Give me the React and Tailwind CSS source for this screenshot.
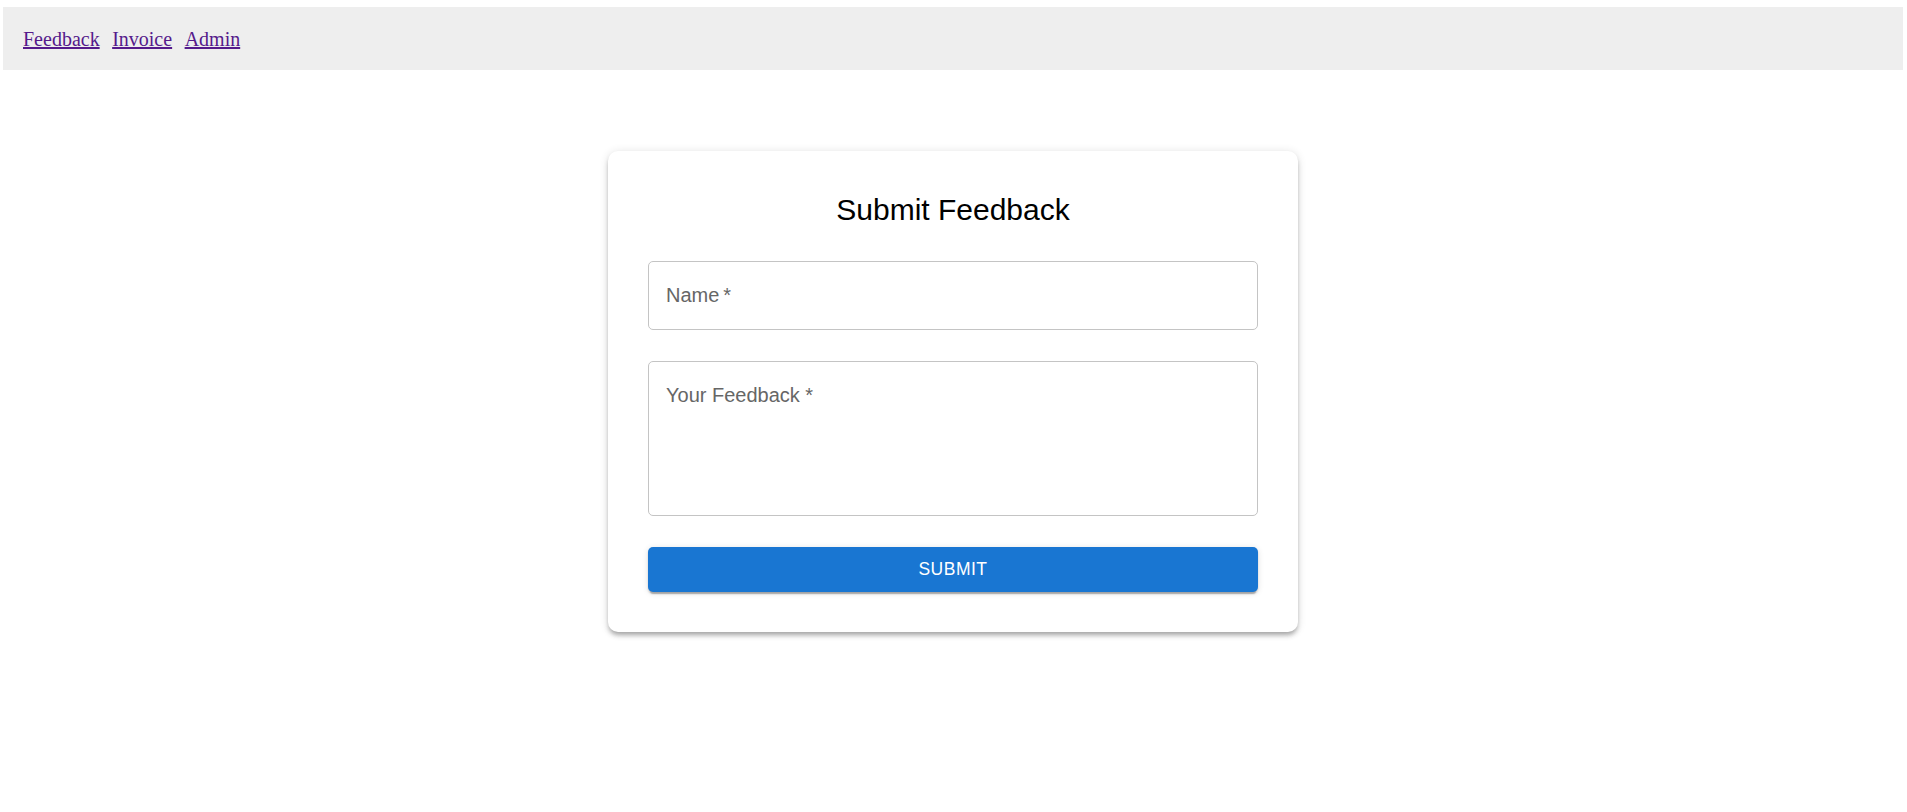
import React from "react";

export default function App() {
  return (
    <div className="min-h-[812px] bg-white pt-[7px]">
      <nav className="ml-[3px] mr-[4px] flex h-[63px] items-center gap-[12.5px] bg-[#eeeeee] pl-[20px] font-['Liberation_Serif',serif] text-[20px]">
        <a href="#" className="text-[#551a8b] underline">Feedback</a>
        <a href="#" className="text-[#551a8b] underline">Invoice</a>
        <a href="#" className="text-[#551a8b] underline">Admin</a>
      </nav>
      <div className="mt-[81px] flex justify-center pr-[1px]">
        <div className="w-[690px] rounded-[10px] bg-white px-[40px] pt-[40px] pb-[40px] font-['Liberation_Sans',Arial,sans-serif] shadow-[0px_4px_4px_-2px_rgba(0,0,0,0.2),0px_4px_5px_0px_rgba(0,0,0,0.14),0px_1px_10px_0px_rgba(0,0,0,0.12)]">
          <h2 className="text-center text-[30px] font-normal leading-[37px] text-black">Submit Feedback</h2>
          <input
            type="text"
            placeholder={"Name\u2009*"}
            className="mt-[33px] block h-[69px] w-full rounded-[5px] border border-[#c4c4c4] px-[17px] text-[20px] text-black outline-none placeholder:text-[#666666]"
          />
          <textarea
            placeholder="Your Feedback *"
            className="mt-[31px] block h-[155px] w-full resize-none rounded-[5px] border border-[#c4c4c4] px-[17px] pt-[19px] text-[20px] leading-[28px] text-black outline-none placeholder:text-[#666666]"
          />
          <button
            type="button"
            className="mt-[31px] flex h-[45px] w-full items-center justify-center rounded-[5px] bg-[#1976d2] text-[17.5px] font-medium tracking-[0.5px] text-white shadow-[0px_4px_1px_-2px_rgba(0,0,0,0.2),0px_2px_2px_0px_rgba(0,0,0,0.14),0px_1px_6px_0px_rgba(0,0,0,0.12)]"
          >
            SUBMIT
          </button>
        </div>
      </div>
    </div>
  );
}
